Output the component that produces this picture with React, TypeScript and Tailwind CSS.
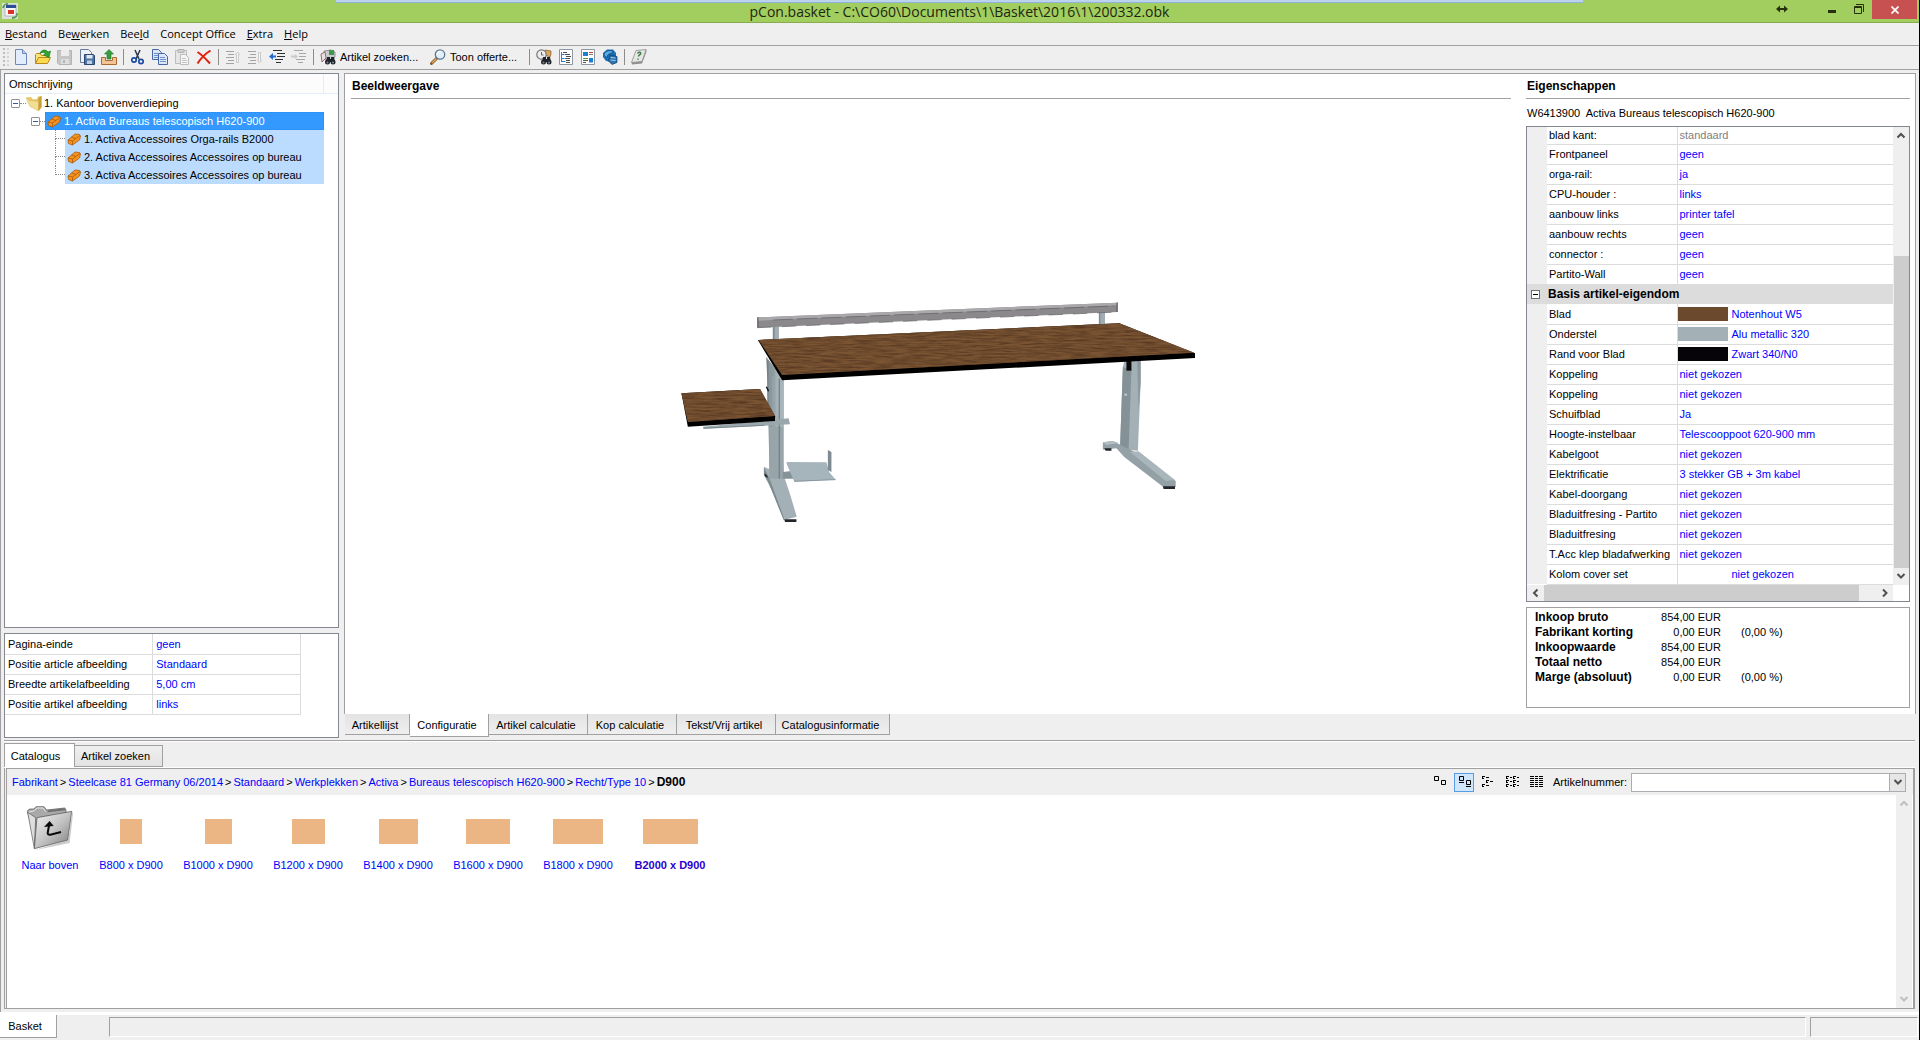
import { useState, type ReactNode } from 'react';
import clsx from 'clsx';

const menuItems = [
  { before: '', key: 'B', after: 'estand' },
  { before: 'Be', key: 'w', after: 'erken' },
  { before: 'Bee', key: 'l', after: 'd' },
  { before: 'Concept Office', key: '', after: '' },
  { before: '', key: 'E', after: 'xtra' },
  { before: '', key: 'H', after: 'elp' },
];

const treeChildren = [
  '1. Activa Accessoires Orga-rails B2000',
  '2. Activa Accessoires Accessoires op bureau',
  '3. Activa Accessoires Accessoires op bureau',
];

const pageSettings = [
  ['Pagina-einde', 'geen'],
  ['Positie article afbeelding', 'Standaard'],
  ['Breedte artikelafbeelding', '5,00 cm'],
  ['Positie artikel afbeelding', 'links'],
];

interface Property {
  label: string;
  value: string;
  swatch?: string;
  muted?: boolean;
}

const articleProps: Property[] = [
  { label: 'blad kant:', value: 'standaard', muted: true },
  { label: 'Frontpaneel', value: 'geen' },
  { label: 'orga-rail:', value: 'ja' },
  { label: 'CPU-houder :', value: 'links' },
  { label: 'aanbouw links', value: 'printer tafel' },
  { label: 'aanbouw rechts', value: 'geen' },
  { label: 'connector :', value: 'geen' },
  { label: 'Partito-Wall', value: 'geen' },
];

const basicProps: Property[] = [
  { label: 'Blad', value: 'Notenhout W5', swatch: 'bg-[#6b492c]' },
  { label: 'Onderstel', value: 'Alu metallic 320', swatch: 'bg-[#a3b1b6]' },
  { label: 'Rand voor Blad', value: 'Zwart 340/N0', swatch: 'bg-[#060409]' },
  { label: 'Koppeling', value: 'niet gekozen' },
  { label: 'Koppeling', value: 'niet gekozen' },
  { label: 'Schuifblad', value: 'Ja' },
  { label: 'Hoogte-instelbaar', value: 'Telescooppoot 620-900 mm' },
  { label: 'Kabelgoot', value: 'niet gekozen' },
  { label: 'Elektrificatie', value: '3 stekker GB + 3m kabel' },
  { label: 'Kabel-doorgang', value: 'niet gekozen' },
  { label: 'Bladuitfresing - Partito', value: 'niet gekozen' },
  { label: 'Bladuitfresing', value: 'niet gekozen' },
  { label: 'T.Acc klep bladafwerking', value: 'niet gekozen' },
  { label: 'Kolom cover set', value: 'niet gekozen', swatch: 'bg-white' },
];

const totals = [
  ['Inkoop bruto', '854,00 EUR', ''],
  ['Fabrikant korting', '0,00 EUR', '(0,00 %)'],
  ['Inkoopwaarde', '854,00 EUR', ''],
  ['Totaal netto', '854,00 EUR', ''],
  ['Marge (absoluut)', '0,00 EUR', '(0,00 %)'],
];

const viewTabs = [
  { name: 'Artikellijst', width: 'w-[65px]' },
  { name: 'Configuratie', width: 'w-[79px]' },
  { name: 'Artikel calculatie', width: 'w-[99px]' },
  { name: 'Kop calculatie', width: 'w-[89px]' },
  { name: 'Tekst/Vrij artikel', width: 'w-[99px]' },
  { name: 'Catalogusinformatie', width: 'w-[114px]' },
];

const breadcrumb = [
  'Fabrikant',
  'Steelcase 81 Germany 06/2014',
  'Standaard',
  'Werkplekken',
  'Activa',
  'Bureaus telescopisch H620-900',
  'Recht/Type 10',
];

const catalogItems = [
  { name: 'B800 x D900', cell: 'w-[62px]', top: 'w-[22px]' },
  { name: 'B1000 x D900', cell: 'w-[68px]', top: 'w-[27px]' },
  { name: 'B1200 x D900', cell: 'w-[68px]', top: 'w-[33px]' },
  { name: 'B1400 x D900', cell: 'w-[68px]', top: 'w-[39px]' },
  { name: 'B1600 x D900', cell: 'w-[68px]', top: 'w-[44px]' },
  { name: 'B1800 x D900', cell: 'w-[68px]', top: 'w-[50px]' },
  { name: 'B2000 x D900', cell: 'w-[72px]', top: 'w-[55px]' },
];

const Icon = ({ children }: { children: ReactNode }) => (
  <svg viewBox="0 0 16 16" className="w-4 h-4 shrink-0" fill="none" aria-hidden="true">
    {children}
  </svg>
);

const NewIcon = () => (
  <Icon>
    <path d="M2.5 .5h7l4 4v11h-11z" fill="#e3ecfa" stroke="#6f88bb" />
    <path d="M9.5 .5v4h4" fill="#b9cdf0" stroke="#6f88bb" />
  </Icon>
);

const OpenIcon = () => (
  <Icon>
    <path d="M.5 14.500V5.500l1-1h4l1 2h6v3" fill="#fbe27a" stroke="#b98a1b" />
    <path d="M.5 14.500l3-6h12l-3 6z" fill="#fdd94f" stroke="#b98a1b" />
    <path d="M5 4.500C6 .5 11 0 13 3l2.500-1-1.500 6.500-5.500-2.500 2-1C9.500 3 7 3 5 4.500z" fill="#2fa52f" stroke="#16701a" strokeWidth=".6" />
  </Icon>
);

const SaveIcon = () => (
  <Icon>
    <path d="M.5 1.500h14v14H2l-1.500-1.500z" fill="#c6c6c6" stroke="#b4b4b4" />
    <path d="M4 1h8v6H4z" fill="#ececec" />
    <path d="M4 10h8v5H4z" fill="#dedede" />
    <path d="M6 11h2v3H6z" fill="#b4b4b4" />
  </Icon>
);

const SaveAsIcon = () => (
  <Icon>
    <path d="M1.500.5h8l3 3v10h-11z" fill="#eef2f8" stroke="#687a96" />
    <path d="M5.500 5.500h9l1 1v9h-10z" fill="#4d74a8" stroke="#2c4870" />
    <path d="M7.500 6h6v3.500h-6z" fill="#dfe9f5" />
    <path d="M8 11.500h5V15H8z" fill="#c3cfdf" />
  </Icon>
);

const ExportIcon = () => (
  <Icon>
    <path d="M.5 8.500h4v3h7v-3h4v7H.5z" fill="#f3c596" stroke="#a86b36" />
    <path d="M8 .5l4.500 4.500H10v5H6V5H3.500z" fill="#349f3a" stroke="#1f7026" strokeWidth=".6" />
  </Icon>
);

const CutIcon = () => (
  <Icon>
    <path d="M5 1l4 9M10 1L6 10" stroke="#29354d" strokeWidth="1.500" />
    <circle cx="4" cy="11" r="2.200" stroke="#1c4ba4" strokeWidth="1.700" />
    <circle cx="11" cy="12.500" r="2.200" stroke="#1c4ba4" strokeWidth="1.700" />
  </Icon>
);

const CopyIcon = () => (
  <Icon>
    <path d="M.5.500h6l3 3v7h-9z" fill="#dbe6f8" stroke="#4466a8" />
    <path d="M6.500 4.500h6l3 3v8h-9z" fill="#dbe6f8" stroke="#4466a8" />
    <path d="M2 4.500h4M2 6.500h4M2 8.500h4M8 8.500h5M8 10.500h6M8 12.500h6" stroke="#7390c4" />
  </Icon>
);

const PasteIcon = () => (
  <Icon>
    <path d="M1.500 1.500h11v13h-11z" fill="#e6e6e6" stroke="#bdbdbd" />
    <path d="M4 .5h6v3H4z" fill="#cfcfcf" stroke="#b5b5b5" />
    <path d="M6.500 5.500h5l3 3v7h-8z" fill="#f5f5f5" stroke="#bdbdbd" />
    <path d="M8 9.500h4M8 11.500h5M8 13.500h5" stroke="#c6c6c6" />
  </Icon>
);

const DeleteIcon = () => (
  <Icon>
    <path d="M1.500 3C6 6 10 10 14 14.500M14.500 1.500C9 5 5 9 1.500 14.500" stroke="#e2200f" strokeWidth="2" />
  </Icon>
);

const MoveUpIcon = () => (
  <Icon>
    <path d="M1 2.500h8M3 5.500h6M1 8.500h8M3 11.500h6M1 14.500h8" stroke="#a3a3a3" />
    <path d="M12.500 3l2 2.500h-1v8h-2v-8h-1z" fill="#f4f4f4" stroke="#b9b9b9" strokeWidth=".7" />
  </Icon>
);

const MoveDownIcon = () => (
  <Icon>
    <path d="M1 2.500h8M3 5.500h6M1 8.500h8M3 11.500h6M1 14.500h8" stroke="#a3a3a3" />
    <path d="M12.500 14l2-2.500h-1v-8h-2v8h-1z" fill="#f4f4f4" stroke="#b9b9b9" strokeWidth=".7" />
  </Icon>
);

const OutdentIcon = () => (
  <Icon>
    <path d="M4 1.500h9M8 4.500h8M8 7.500h8M6 10.500h8M7 13.500h5" stroke="#303030" />
    <path d="M0 7.500L4 4v2.500h3v2H4V11z" fill="#2b6bd1" />
  </Icon>
);

const IndentIcon = () => (
  <Icon>
    <path d="M3 1.500h9M8 4.500h7M8 7.500h7M5 10.500h9M7 13.500h5" stroke="#a6a6a6" />
    <path d="M7 7.500L4 5v1.500H0v2h4V10z" fill="#c9c9c9" />
  </Icon>
);

const Binoculars = () => (
  <>
    <path d="M7 8h3v2h1V8h3l1 5H6z" fill="#20242a" />
    <circle cx="7.500" cy="13" r="2.500" fill="#20242a" />
    <circle cx="13" cy="13" r="2.500" fill="#20242a" />
    <circle cx="7.500" cy="13.500" r="1" fill="#7e8b99" />
    <circle cx="13" cy="13.500" r="1" fill="#7e8b99" />
  </>
);

const FindArticleIcon = () => (
  <Icon>
    <path d="M4 2l7-1 4 2v5l-6 4-5-2z" fill="#c9ccd0" stroke="#6c7076" strokeWidth=".7" />
    <path d="M9 1h5v5H9z" fill="#3f9a45" />
    <path d="M1 5l4-2 1 6-4 4z" fill="#e9e2e2" stroke="#8a4d4d" strokeWidth=".8" />
    <Binoculars />
  </Icon>
);

const MagnifierIcon = () => (
  <Icon>
    <path d="M1.500 14.500l5-5" stroke="#8a5a22" strokeWidth="3" strokeLinecap="round" />
    <path d="M2 14l4.500-4.500" stroke="#e2ae5b" strokeWidth="1.200" />
    <circle cx="10" cy="5.500" r="4.700" fill="#dff0fb" stroke="#5e7791" strokeWidth="1.300" />
    <path d="M7.500 5a3 3 0 013-2.500" stroke="#fff" strokeWidth="1.300" />
  </Icon>
);

const FindCatalogIcon = () => (
  <Icon>
    <path d="M9 1l6 1v3l-1 3-5-2z" fill="#d9a65e" stroke="#84561d" strokeWidth=".7" />
    <circle cx="5.500" cy="5.500" r="4.700" fill="#ececec" stroke="#777" strokeWidth="1.200" />
    <path d="M5.500 3v3h2" stroke="#666" />
    <Binoculars />
  </Icon>
);

const TreeViewIcon = () => (
  <Icon>
    <path d="M1.500.500h13v15h-13z" fill="#fff" stroke="#8d97a3" />
    <path d="M3.500 3v10M3.500 5.500h3M3.500 9.500h3M3.500 12.500h4" stroke="#2b84c8" />
    <path d="M5 3.500h4M7 5.500h5M8 7.500h5M7 9.500h5M8 11.500h4M8 13.500h4" stroke="#4d4d4d" />
  </Icon>
);

const TileViewIcon = () => (
  <Icon>
    <path d="M1.500.500h13v15h-13z" fill="#fff" stroke="#8d97a3" />
    <path d="M3 3h5v4H3zM9 9h4v4.500H9z" fill="#1d7fd0" />
    <path d="M9 3.500h4" stroke="#c7372f" />
    <path d="M9 5.500h4" stroke="#7a7a7a" />
    <path d="M3 9.500h5" stroke="#4d9b35" />
    <path d="M3 11.500h5M3 13.500h3" stroke="#555" />
  </Icon>
);

const WebIcon = () => (
  <Icon>
    <path d="M1 4l4-3.500 6 0 3 3.500v4l-4 5-6-1-3-4z" fill="#1a6fb7" />
    <path d="M2 5c2-3 5-4 9-3l-2 2.500C6.500 4.500 5 6 5 8.500 3.500 8 2.500 7 2 5z" fill="#5faee2" stroke="#104c84" strokeWidth=".7" />
    <path d="M8 6l7 1.500v6L10 15.500 6.500 12z" fill="#2f72ae" stroke="#0d3d6c" strokeWidth=".7" />
    <path d="M8.500 8.500l5 .5M8.500 11l5 .5" stroke="#9bd0f2" />
  </Icon>
);

const HelpIcon = () => (
  <Icon>
    <path d="M5 1.500l10-1-4 12-10.500 1z" fill="#e6e6e4" stroke="#8c8c8c" strokeWidth=".8" />
    <path d="M.5 13.500l.5 2 10-1L15.500 3V.5l-4.500 12z" fill="#8f8f8f" />
    <path d="M6.500 4.500C7.500 2.500 10.500 3 9.500 5c-.6 1-2 1-2 2.500M7 9.500v1.200" stroke="#3c8048" strokeWidth="1.500" />
  </Icon>
);

const FolderIcon = () => (
  <Icon>
    <path d="M0 2.500l5-.5 2 2.500 4-.5 1-2.500 3.500-.5v11l-2.500 4z" fill="#e6c765" />
    <path d="M0 3l4 2.500 8.500 1v9.500L4 11.500z" fill="#f3dd92" stroke="#d9b95f" strokeWidth=".5" />
    <path d="M12.500 3l3-2v11l-3 4z" fill="#c99e3a" />
  </Icon>
);

const BrickIcon = () => (
  <Icon>
    <path d="M2 9l7-6 4.500.5 1 1.500-1 4-7 5-4-1.500z" fill="#f79420" stroke="#a95a0a" strokeWidth=".8" />
    <path d="M2 9l4.500 1 7.500-5.500M6.500 10v4M5.500 6l4.500 1.500" stroke="#a95a0a" strokeWidth=".8" />
  </Icon>
);

const AppIcon = () => (
  <Icon>
    <path d="M0 0h16v16H0z" fill="#d9e1da" />
    <path d="M1 5c1-3 3-4 5-4M15 10c0 3-2 5-5 5" stroke="#4d9c52" strokeWidth="1.800" />
    <path d="M3 2h11v11H3z" fill="#f7f7f7" stroke="#9aa39d" strokeWidth=".7" />
    <path d="M4 2h10v3H4z" fill="#2c4f93" />
    <path d="M6 7h6v4H6z" fill="#df3027" />
  </Icon>
);

const Chevron = ({ dir, color = '#505050' }: { dir: 'up' | 'down' | 'left' | 'right'; color?: string }) => {
  const paths = {
    up: 'M1.500 6.500L5 3l3.500 3.500',
    down: 'M1.500 3L5 6.500 8.500 3',
    left: 'M6.500 1.500L3 5l3.500 3.500',
    right: 'M3 1.500L6.500 5 3 8.500',
  };
  return (
    <svg viewBox="0 0 10 10" className="w-2.5 h-2.5" fill="none" aria-hidden="true">
      <path d={paths[dir]} stroke={color} strokeWidth="2" />
    </svg>
  );
};

const ToolButton = ({ label, children }: { label: string; children: ReactNode }) => (
  <button aria-label={label} className="w-[22px] h-5 flex items-center justify-center">
    {children}
  </button>
);

const Separator = () => <span className="w-[7px] flex justify-center"><span className="w-px h-4 bg-[#8c8c8c]" /></span>;

const TitleBar = () => (
  <header className="relative grid grid-cols-[1fr_auto_1fr] h-[23px] bg-[#a2cd5f] border-b border-[#87ab4f]">
    <span className="absolute top-0 left-[336px] right-[336px] h-[3px] bg-[#bcd3ec] border-b border-[#8fb2dd]" />
    <div className="pl-0.5 pt-[3px]"><AppIcon /></div>
    <h1 className="font-['Open_Sans',sans-serif] text-[14px] leading-[23px] text-[#1d2611]">
      pCon.basket - C:\CO60\Documents\1\Basket\2016\1\200332.obk
    </h1>
    <div className="flex justify-end items-start">
      <svg viewBox="0 0 12 8" className="w-3 h-2 mt-[5px] mr-10" aria-hidden="true">
        <path d="M0 4l4-3.500v2.500h4V.5L12 4 8 7.500V5H4v2.500z" fill="#26300f" />
      </svg>
      <button aria-label="Minimaliseren" className="w-[26px] h-[18px] flex items-end justify-start pb-[5px]">
        <span className="w-2 h-[3px] bg-[#26300f]" />
      </button>
      <button aria-label="Vorig formaat" className="w-[18px] h-[18px] flex items-center justify-start">
        <svg viewBox="0 0 10 10" className="w-2.5 h-2.5" fill="none" aria-hidden="true">
          <path d="M2 .5h7.500V8M.5 2.500h7v7h-7zM.5 3.500h7" stroke="#26300f" />
        </svg>
      </button>
      <button aria-label="Sluiten" className="w-[45px] h-[19px] mr-0.5 bg-[#c75050] flex items-center justify-center">
        <svg viewBox="0 0 8 8" className="w-2 h-2" aria-hidden="true">
          <path d="M.5.500l7 7M7.500.500l-7 7" stroke="#fff" strokeWidth="1.700" />
        </svg>
      </button>
    </div>
  </header>
);

const Toolbar = () => (
  <div className="flex items-center h-6 pb-px border-b border-[#a0a0a0]">
    <span className="w-2.5 flex gap-0.5 pl-[3px]">
      <span className="h-[18px] border-l-2 border-dotted border-[#bdbdbd]" />
      <span className="h-[18px] border-l-2 border-dotted border-[#d4d4d4]" />
    </span>
    <ToolButton label="Nieuw"><NewIcon /></ToolButton>
    <ToolButton label="Openen"><OpenIcon /></ToolButton>
    <ToolButton label="Opslaan"><SaveIcon /></ToolButton>
    <ToolButton label="Opslaan als"><SaveAsIcon /></ToolButton>
    <ToolButton label="Exporteren"><ExportIcon /></ToolButton>
    <Separator />
    <ToolButton label="Knippen"><CutIcon /></ToolButton>
    <ToolButton label="Kopiëren"><CopyIcon /></ToolButton>
    <ToolButton label="Plakken"><PasteIcon /></ToolButton>
    <ToolButton label="Verwijderen"><DeleteIcon /></ToolButton>
    <Separator />
    <ToolButton label="Omhoog"><MoveUpIcon /></ToolButton>
    <ToolButton label="Omlaag"><MoveDownIcon /></ToolButton>
    <ToolButton label="Niveau hoger"><OutdentIcon /></ToolButton>
    <ToolButton label="Niveau lager"><IndentIcon /></ToolButton>
    <Separator />
    <button className="flex items-center gap-1 w-[110px] h-5 pl-[3px] whitespace-nowrap">
      <FindArticleIcon />
      Artikel zoeken...
    </button>
    <button className="flex items-center gap-1 w-[99px] h-5 pl-[3px] whitespace-nowrap">
      <MagnifierIcon />
      Toon offerte...
    </button>
    <Separator />
    <ToolButton label="Catalogus doorzoeken"><FindCatalogIcon /></ToolButton>
    <ToolButton label="Boomweergave"><TreeViewIcon /></ToolButton>
    <ToolButton label="Tegelweergave"><TileViewIcon /></ToolButton>
    <ToolButton label="Online"><WebIcon /></ToolButton>
    <Separator />
    <ToolButton label="Help-onderwerpen"><HelpIcon /></ToolButton>
  </div>
);

const Expander = () => (
  <button aria-label="Samenvouwen" className="w-[9px] h-[9px] shrink-0 border border-[#919191] rounded-[1px] bg-white flex items-center justify-center">
    <span className="w-[5px] h-px bg-[#3b55a5]" />
  </button>
);

const BasketTree = () => (
  <section className="flex-1 min-h-0 bg-white border border-[#828790]">
    <div className="flex h-5 border-b border-[#e3edf7] bg-[#fcfcfc]">
      <span className="flex-1 pl-1 leading-[20px]">Omschrijving</span>
      <span className="w-[15px] border-l border-[#e3edf7]" />
    </div>
    <ul>
      <li>
        <div className="flex items-center h-[18px] pl-1.5">
          <Expander />
          <span className="w-[6px] border-t border-dotted border-[#8a8a8a]" />
          <FolderIcon />
          <span className="pl-0.5">1. Kantoor bovenverdieping</span>
        </div>
        <ul>
          <li>
            <div className="flex items-center h-[18px] pl-[26px] pr-[14px]">
              <Expander />
              <span className="w-[5px] border-t border-dotted border-[#8a8a8a]" />
              <span className="flex-1 flex items-center h-[18px] pl-px bg-[#3399ff] text-white outline-1 -outline-offset-1 outline-dotted outline-[#cc6600]">
                <BrickIcon />
                <span className="pl-0.5">1. Activa Bureaus telescopisch H620-900</span>
              </span>
            </div>
            <ul>
              {treeChildren.map((name, i) => (
                <li key={name} className="flex h-[18px] pl-[50px] pr-[14px]">
                  <span className="w-2.5">
                    <span className="block h-[9px] border-l border-b border-dotted border-[#8a8a8a]" />
                    {i < treeChildren.length - 1 && (
                      <span className="block h-[9px] border-l border-dotted border-[#8a8a8a]" />
                    )}
                  </span>
                  <span className="flex-1 flex items-center pl-px bg-[#bbdcff]">
                    <BrickIcon />
                    <span className="pl-0.5">{name}</span>
                  </span>
                </li>
              ))}
            </ul>
          </li>
        </ul>
      </li>
    </ul>
  </section>
);

const PageSettings = () => (
  <section className="h-[105px] shrink-0 bg-white border border-[#828790]">
    <table className="w-[296px] table-fixed border-collapse">
      <tbody>
        {pageSettings.map(([label, value]) => (
          <tr key={label} className="h-5">
            <th className="w-1/2 p-0 pl-[3px] text-left font-normal border-b border-r border-[#dcdcdc]">{label}</th>
            <td className="p-0 pl-[3px] text-[#0000ff] border-b border-r border-[#dcdcdc]">{value}</td>
          </tr>
        ))}
      </tbody>
    </table>
  </section>
);

const DeskDrawing = () => (
  <svg viewBox="0 0 1568 780" preserveAspectRatio="none" className="w-[560px] h-[260px]" role="img" aria-label="Activa bureau">
    <defs>
      <filter id="grain" x="0" y="0" width="1" height="1" colorInterpolationFilters="sRGB">
        <feTurbulence type="fractalNoise" baseFrequency="0.02 0.2" numOctaves="3" seed="4" />
        <feColorMatrix values="0 0 0 0 .34  0 0 0 0 .22  0 0 0 0 .13  0 1.800 0 0 -.55" />
        <feComposite in2="SourceGraphic" operator="in" />
        <feBlend in2="SourceGraphic" mode="normal" />
      </filter>
      <linearGradient id="leg" x1="0" y1="0" x2="1" y2="0">
        <stop offset="0" stopColor="#849197" />
        <stop offset=".45" stopColor="#8f9ca2" />
        <stop offset=".55" stopColor="#a3b0b6" />
        <stop offset="1" stopColor="#a9b6bb" />
      </linearGradient>
    </defs>
    {/* rail with its two supports */}
    <path d="M316 138h17v42h-17zM1229 95h17v40h-17z" fill="#a0adb3" />
    <path d="M316 138h5v42h-5zM1229 95h4v40h-4z" fill="#7f8c92" />
    <path d="M273 112L1281 68v28L273 143z" fill="#8b898c" />
    <path d="M273 112L1281 68v8L273 122z" fill="#aaa8aa" />
    <path d="M316 120L1270 78" stroke="#626064" strokeWidth="2" strokeDasharray="56 12" />
    <path d="M273 143L1281 96" stroke="#646266" strokeWidth="2" strokeDasharray="40 28" />
    <path d="M274 112v31M1280 67v29" stroke="#222" strokeWidth="2" />
    {/* right leg */}
    <path d="M1300 242h46v60l-8 210-50-4 8-246z" fill="#a3b0b6" />
    <path d="M1296 262l24 6-8 244-24-4z" fill="#849197" />
    <path d="M1336 242h10v60l-6 90z" fill="#8b989e" />
    <path d="M1306 242h14v30h-14z" fill="#0b0b0b" />
    <circle cx="1304" cy="344" r="5" fill="#b9c5ca" stroke="#6b777c" />
    <path d="M1240 487l28-4 60 32 116 88v18l-32 2-112-92-22-26-38 4z" fill="#93a1a7" />
    <path d="M1316 516l24-2 102 86-26 3z" fill="#a9b7bc" />
    <path d="M1240 487l28-4 16 6-34 6z" fill="#b1bec3" />
    <path d="M1244 505h20v7h-16zM1408 619h34v8h-32z" fill="#222628" />
    {/* left leg */}
    <path d="M297 230l50 68v292l-40 6-6-290z" fill="url(#leg)" />
    <path d="M334 296v296M302 240v190" stroke="#6d7a80" strokeWidth="3" />
    <path d="M318 290v300" stroke="#97a4aa" strokeWidth="7" />
    <path d="M298 320l6 14" stroke="#111" strokeWidth="4" />
    <path d="M291 560l12 6 44-10v32l18 58 18 64-36 10-34-90-22-44z" fill="#a3b1b7" />
    <path d="M291 562l16 34 40 118v8l-44-116-12-24z" fill="#7d8a90" />
    <path d="M293 580l8 8v6l-8-6zM348 718h34v8h-32z" fill="#222628" />
    <path d="M306 440h38v156h-38z" fill="#97a4aa" />
    <path d="M334 440v156" stroke="#6d7a80" strokeWidth="3" />
    {/* cpu holder */}
    <path d="M344 576l30-4v24h-30z" fill="#859298" />
    <path d="M354 546l112 1 8 30 18 22-116 6-20-50z" fill="#a6b5bb" />
    <path d="M376 604l116-5" stroke="#74828a" strokeWidth="2" />
    <path d="M470 510l10 6v60l-10-6z" fill="#7f8b91" />
    {/* side table */}
    <path d="M120 440l240-25 4 18-72 4-170 9z" fill="#9aa8ae" />
    <path d="M122 445l170-9" stroke="#66727a" strokeWidth="2" />
    <path d="M60 340L280 327l42 82v14L78 440z" fill="#000" />
    <path d="M60 340L280 327l42 81L78 426z" fill="#7b5533" filter="url(#grain)" />
    {/* desktop */}
    <path d="M274 180L1286 130l212 90v14L342 301z" fill="#000" />
    <path d="M276 180L1286 130l210 88L342 285z" fill="#7b5533" filter="url(#grain)" />
  </svg>
);

const PropertyRow = ({ prop, first }: { prop: Property; first?: boolean }) => (
  <tr className={first ? 'h-[17px]' : 'h-5'}>
    <td className="p-0 bg-[#efefef]" />
    <th className="p-0 pl-0.5 text-left font-normal border-b border-r border-[#dcdcdc] whitespace-nowrap">{prop.label}</th>
    <td className={clsx('p-0 border-b border-[#dcdcdc]', prop.muted ? 'text-[#808080]' : 'text-[#0000ff]')}>
      {prop.swatch ? (
        <span className="flex items-center gap-1">
          <span className={clsx('w-[50px] h-3.5', prop.swatch)} />
          {prop.value}
        </span>
      ) : (
        <span className="pl-0.5">{prop.value}</span>
      )}
    </td>
  </tr>
);

const PropertyPanel = () => (
  <section className="w-[384px] shrink-0 flex flex-col">
    <h2 className="h-[25px] leading-[25px] pl-px font-bold text-[12px] border-b border-[#a0a0a0]">Eigenschappen</h2>
    <p className="h-[27px] leading-[29px] pl-px whitespace-pre">W6413900  Activa Bureaus telescopisch H620-900</p>
    <div className="border border-[#828790]">
      <div className="flex">
        <table className="flex-1 table-fixed border-collapse">
          <colgroup>
            <col className="w-5" />
            <col className="w-[130px]" />
            <col />
          </colgroup>
          <tbody>
            {articleProps.map((prop, i) => (
              <PropertyRow key={prop.label} prop={prop} first={i === 0} />
            ))}
            <tr className="h-5 bg-[#dcdcdc]">
              <td className="p-0">
                <button aria-label="Groep samenvouwen" className="w-[9px] h-[9px] ml-1 border border-[#707070] bg-white flex items-center justify-center">
                  <span className="w-[5px] h-px bg-black" />
                </button>
              </td>
              <th colSpan={2} className="p-0 pl-px text-left font-bold text-[12px]">Basis artikel-eigendom</th>
            </tr>
            {basicProps.map((prop, i) => (
              <PropertyRow key={i} prop={prop} />
            ))}
          </tbody>
        </table>
        <div className="w-4 flex flex-col items-center bg-[#efefef]">
          <span className="h-[17px] flex items-center"><Chevron dir="up" /></span>
          <span className="h-28" />
          <span className="w-[15px] flex-1 bg-[#cdcdcd]" />
          <span className="h-[17px] flex items-center"><Chevron dir="down" /></span>
        </div>
      </div>
      <div className="flex h-4 pr-4">
        <span className="w-[17px] flex items-center justify-center bg-[#efefef]"><Chevron dir="left" /></span>
        <span className="flex-1 bg-[#cdcdcd]" />
        <span className="w-[34px] flex items-center justify-end pr-[3px] bg-[#efefef]"><Chevron dir="right" /></span>
      </div>
    </div>
    <div className="flex-1 mt-[5px] mb-1.5 pt-0.5 pl-2 border border-[#a0a0a0]">
      <table>
        <tbody>
          {totals.map(([label, amount, percent]) => (
            <tr key={label} className="h-[15px] leading-[15px]">
              <th className="w-[104px] p-0 text-left font-bold text-[12px] whitespace-nowrap">{label}</th>
              <td className="w-[82px] p-0 text-right">{amount}</td>
              <td className="w-[70px] p-0 pl-5">{percent}</td>
            </tr>
          ))}
        </tbody>
      </table>
    </div>
  </section>
);

const ConfigView = () => {
  const [active, setActive] = useState('Configuratie');

  return (
    <div className="flex-1 min-w-0 flex flex-col">
      <div className="flex-1 flex gap-[15px] pl-1.5 pr-[5px] bg-white border border-b-0 border-[#a0a0a0]">
        <section className="flex-1 flex flex-col">
          <h2 className="h-[25px] leading-[25px] pl-px font-bold text-[12px] border-b border-[#a0a0a0]">Beeldweergave</h2>
          <div className="flex-1 flex items-center justify-center pl-[18px] pt-1.5">
            <DeskDrawing />
          </div>
        </section>
        <PropertyPanel />
      </div>
      <div role="tablist" className="flex items-start h-[26px] pl-px">
        {viewTabs.map(tab => (
          <button
            key={tab.name}
            role="tab"
            aria-selected={tab.name === active}
            onClick={() => setActive(tab.name)}
            className={clsx(
              'pr-1 text-center border-b border-r border-[#a0a0a0] whitespace-nowrap',
              tab.width,
              tab.name === active ? 'h-[23px] leading-[20px] bg-white' : 'h-[21px] leading-[22px] bg-linear-to-b from-[#e3e3e3] to-[#efefef]'
            )}
          >
            {tab.name}
          </button>
        ))}
      </div>
    </div>
  );
};

const FolderUp = () => (
  <svg viewBox="78 585 150 144" className="w-[50px] h-12" fill="none" aria-hidden="true">
    <defs>
      <linearGradient id="folder" x1="0" y1="0" x2="1" y2="1">
        <stop offset="0" stopColor="#f3f3f3" />
        <stop offset=".5" stopColor="#c4c4c4" />
        <stop offset="1" stopColor="#7c7c7c" />
      </linearGradient>
    </defs>
    <path d="M106 724l106-22 10-88-2-8-12 86z" fill="#999" opacity=".5" />
    <path d="M85 606l6-6h14l6-7h24l8 10 54-6 4 4v14l-90 94z" fill="#a9a9a9" stroke="#4e4e4e" strokeWidth="2" />
    <path d="M146 607l52-6" stroke="#6f6f6f" strokeWidth="6" />
    <path d="M88 610l18-5 8-8h18l8 11" stroke="#e8e8e8" strokeWidth="3" />
    <path d="M86 610l20 108 4-92z" fill="#dedede" stroke="#555" strokeWidth="2" />
    <path d="M114 626l104-19-12 86-100 26z" fill="url(#folder)" stroke="#4a4a4a" strokeWidth="2" />
    <path d="M151 644l-5 28q0 6 8 5l32-8" stroke="#080808" strokeWidth="6" />
    <path d="M135 654l17-18 12 15z" fill="#080808" />
  </svg>
);

const viewIcons = [
  { name: 'Grote pictogrammen', art: <path d="M2.500 2.500h4v4h-4zM9.500 6.500h4v4h-4z" stroke="#000" /> },
  { name: 'Pictogrammen met tekst', art: <path d="M3.500 2.500h4v4h-4zM3 8.500h5M10.500 6.500h4v4h-4zM10 12.500h5" stroke="#000" /> },
  { name: 'Boom', art: <path d="M2 2.500h3M2 4.500h2M2.500 2v3M6 3.500h3M6 6.500h3M6 8.500h2M6.500 6v3M10 7.500h3M2 10.500h3M2 12.500h2M2.500 10v3M6 11.500h3" stroke="#000" /> },
  { name: 'Lijst', art: <path d="M2 2.500h3M2 4.500h2M2.500 2v3M6 3.500h2M9 2.500h3M9 4.500h2M9.500 2v3M13 3.500h2M2 6.500h3M2 8.500h2M2.500 6v3M6 7.500h2M9 6.500h3M9 8.500h2M9.500 6v3M13 7.500h2M2 10.500h3M2 12.500h2M2.500 10v3M6 11.500h2M9 10.500h3M9 12.500h2M9.500 10v3M13 11.500h2" stroke="#000" /> },
  { name: 'Details', art: <path d="M2 2.500h4M7 2.500h3M11 2.500h4M2 4.500h4M7 4.500h3M11 4.500h4M2 6.500h4M7 6.500h3M11 6.500h4M2 8.500h4M7 8.500h3M11 8.500h4M2 10.500h4M7 10.500h3M11 10.500h4M2 12.500h4M7 12.500h3M11 12.500h4" stroke="#000" /> },
];

const Catalog = () => (
  <section className="h-[272px] shrink-0 flex flex-col ml-[3px] mr-1 border-t border-[#a0a0a0]">
    <div role="tablist" className="flex items-end h-[27px] border-t border-b border-white">
      <button role="tab" aria-selected="true" className="w-[71px] h-6 leading-[22px] bg-white border-l border-t border-r border-[#a0a0a0]">
        <span className="pr-2">Catalogus</span>
      </button>
      <button role="tab" aria-selected="false" className="w-[88px] h-[22px] pl-1.5 text-left border-t border-r border-b border-[#a0a0a0] bg-linear-to-b from-[#efefef] to-[#e3e3e3]">
        Artikel zoeken
      </button>
    </div>
    <div className="flex-1 flex flex-col min-h-0 border-l border-r-2 border-b border-[#a0a0a0] pl-px mb-[3px]">
      <div className="flex-1 flex flex-col border-l border-t border-[#a0a0a0]">
        <div className="flex items-center h-[26px] pl-[5px] pr-[7px] bg-[#efefef]">
          <nav className="flex-1 flex items-center gap-0.5 whitespace-nowrap">
            {breadcrumb.map(crumb => (
              <span key={crumb} className="flex gap-0.5">
                <a href="#" className="text-[#0000ff]">{crumb}</a>
                <span>&gt;</span>
              </span>
            ))}
            <span className="font-bold text-[12px]">D900</span>
          </nav>
          <div className="flex gap-1 mr-[7px]">
            {viewIcons.map((icon, i) => (
              <button
                key={icon.name}
                aria-label={icon.name}
                className={clsx('w-5 h-[19px] flex items-center justify-center border', i === 1 ? 'bg-[#cfe6fc] border-[#569de5]' : 'border-transparent')}
              >
                <Icon>{icon.art}</Icon>
              </button>
            ))}
          </div>
          <label htmlFor="article-number" className="mr-1">Artikelnummer:</label>
          <div className="flex w-[275px] h-[19px] border border-[#abadb3] bg-white">
            <select id="article-number" className="flex-1 appearance-none outline-none" />
            <span className="w-4 flex items-center justify-center border-l border-[#abadb3] bg-[#e6e6e6] pointer-events-none">
              <Chevron dir="down" />
            </span>
          </div>
        </div>
        <div className="flex-1 flex bg-white">
          <ul className="flex-1 flex gap-[22px] pl-[15px] pt-[9px]">
            <li className="w-14">
              <a href="#" className="flex flex-col items-center text-[#0000ff] whitespace-nowrap">
                <FolderUp />
                <span className="mt-1.5 leading-[14px]">Naar boven</span>
              </a>
            </li>
            {catalogItems.map((item, i) => (
              <li key={item.name} className={item.cell}>
                <a href="#" className={clsx('flex flex-col items-center whitespace-nowrap', i === catalogItems.length - 1 ? 'text-[#2a00d0] font-bold' : 'text-[#0000ff]')}>
                  <span className="h-12 flex items-center pt-1.5">
                    <span className={clsx('h-[25px] bg-[#ebb683]', item.top)} />
                  </span>
                  <span className="mt-1.5 leading-[14px]">{item.name}</span>
                </a>
              </li>
            ))}
          </ul>
          <div className="w-4 mr-px flex flex-col items-center justify-between py-1 bg-[#efefef]">
            <Chevron dir="up" color="#bfbfbf" />
            <Chevron dir="down" color="#bfbfbf" />
          </div>
        </div>
      </div>
    </div>
  </section>
);

const StatusBar = () => (
  <footer className="flex h-7 border-t-[3px] border-white">
    <button className="w-[57px] h-[23px] pr-1.5 leading-[20px] bg-white border-r border-b border-[#a0a0a0]">Basket</button>
    <span className="w-[52px]" />
    <span className="flex-1 h-5 mt-0.5 border-t border-l border-t-[#a0a0a0] border-l-[#a0a0a0] border-b border-r border-b-white border-r-white" />
    <span className="w-[108px] h-5 mt-0.5 ml-1 mr-px border-t border-l border-t-[#a0a0a0] border-l-[#a0a0a0] border-b border-r border-b-white border-r-white" />
  </footer>
);

const App = () => {
  return (
    <div className="h-screen flex flex-col bg-[#efefef] text-black text-[11px] leading-[14px] font-['Liberation_Sans',Arial,sans-serif] border-r border-black overflow-hidden">
      <TitleBar />
      <nav className="flex items-center gap-[11px] h-[23px] pl-[5px] pb-px border-b border-[#a0a0a0] font-['Open_Sans',sans-serif] text-[11px]">
        {menuItems.map(item => (
          <button key={item.before + item.key}>
            {item.before}
            <span className="underline">{item.key}</span>
            {item.after}
          </button>
        ))}
      </nav>
      <Toolbar />
      <main className="flex-1 min-h-0 flex flex-col border-l border-[#a0a0a0]">
        <div className="flex-1 min-h-0 flex gap-[5px] pl-[3px] pr-[3px] pt-[3px]">
          <div className="w-[335px] shrink-0 flex flex-col gap-[5px] pb-0.5">
            <BasketTree />
            <PageSettings />
          </div>
          <ConfigView />
        </div>
        <Catalog />
      </main>
      <StatusBar />
    </div>
  );
};

export default App;
